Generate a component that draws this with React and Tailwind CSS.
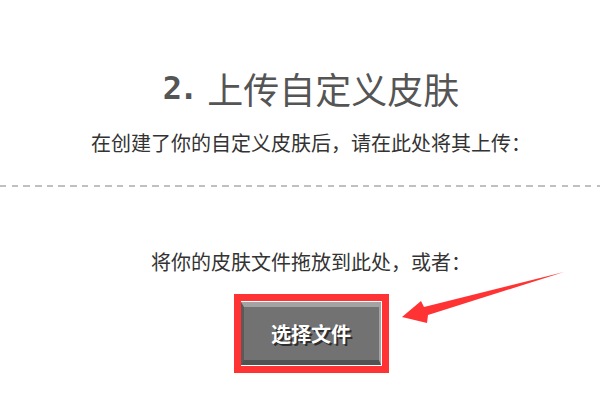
import React from 'react';

const cjk = { fontFamily: '"Noto Sans CJK SC", "Noto Sans", sans-serif' };

const Arrow = () => (
  <svg className="absolute left-0 top-0" width="600" height="400" viewBox="0 0 600 400">
    <polygon
      points="402,317 421,301 424,307 564,272 428,315 427,323"
      fill="#ff3333"
    />
  </svg>
);

const App = () => {
  return (
    <div className="relative w-[600px] h-[400px] bg-white overflow-hidden" style={cjk}>
      <div className="pl-[22px] pt-[67px] text-center">
        <h1 className="text-[36px] leading-[42px] text-[#555555] flex items-center justify-center">
          <span className="text-[32px] font-black tracking-[-3px] mr-[12px]" style={{ fontFamily: '"DejaVu Sans Mono", monospace' }}>
            2.
          </span>
          <span>上传自定义皮肤</span>
        </h1>
        <p className="mt-[23px] text-[20px] leading-[22px] text-[#333333]">
          在创建了你的自定义皮肤后，请在此处将其上传：
        </p>
      </div>

      <div className="mt-[31px] h-[2px] w-full bg-[repeating-linear-gradient(90deg,#c0c0c0_0_6.5px,transparent_6.5px_11.7px)]" />

      <div className="pl-[22px] flex flex-col items-center">
        <p className="mt-[64px] text-[20px] leading-[22px] text-[#333333]">
          将你的皮肤文件拖放到此处，或者：
        </p>
        <div className="mt-[21px] border-[7px] border-[#ff3333] bg-white py-[1px] pr-[1px]">
          <button className="w-[140px] h-[63px] bg-[#727272] border-t-[5px] border-t-[#a3a3a3] border-b-[5px] border-b-[#525252] border-l-[3px] border-l-[#5a5a5a] border-r-[2px] border-r-[#a3a3a3] text-white text-[20px] font-bold [text-shadow:2px_2px_0_#2f2f2f]">
            选择文件
          </button>
        </div>
      </div>

      <Arrow />
    </div>
  );
};

export default App;
